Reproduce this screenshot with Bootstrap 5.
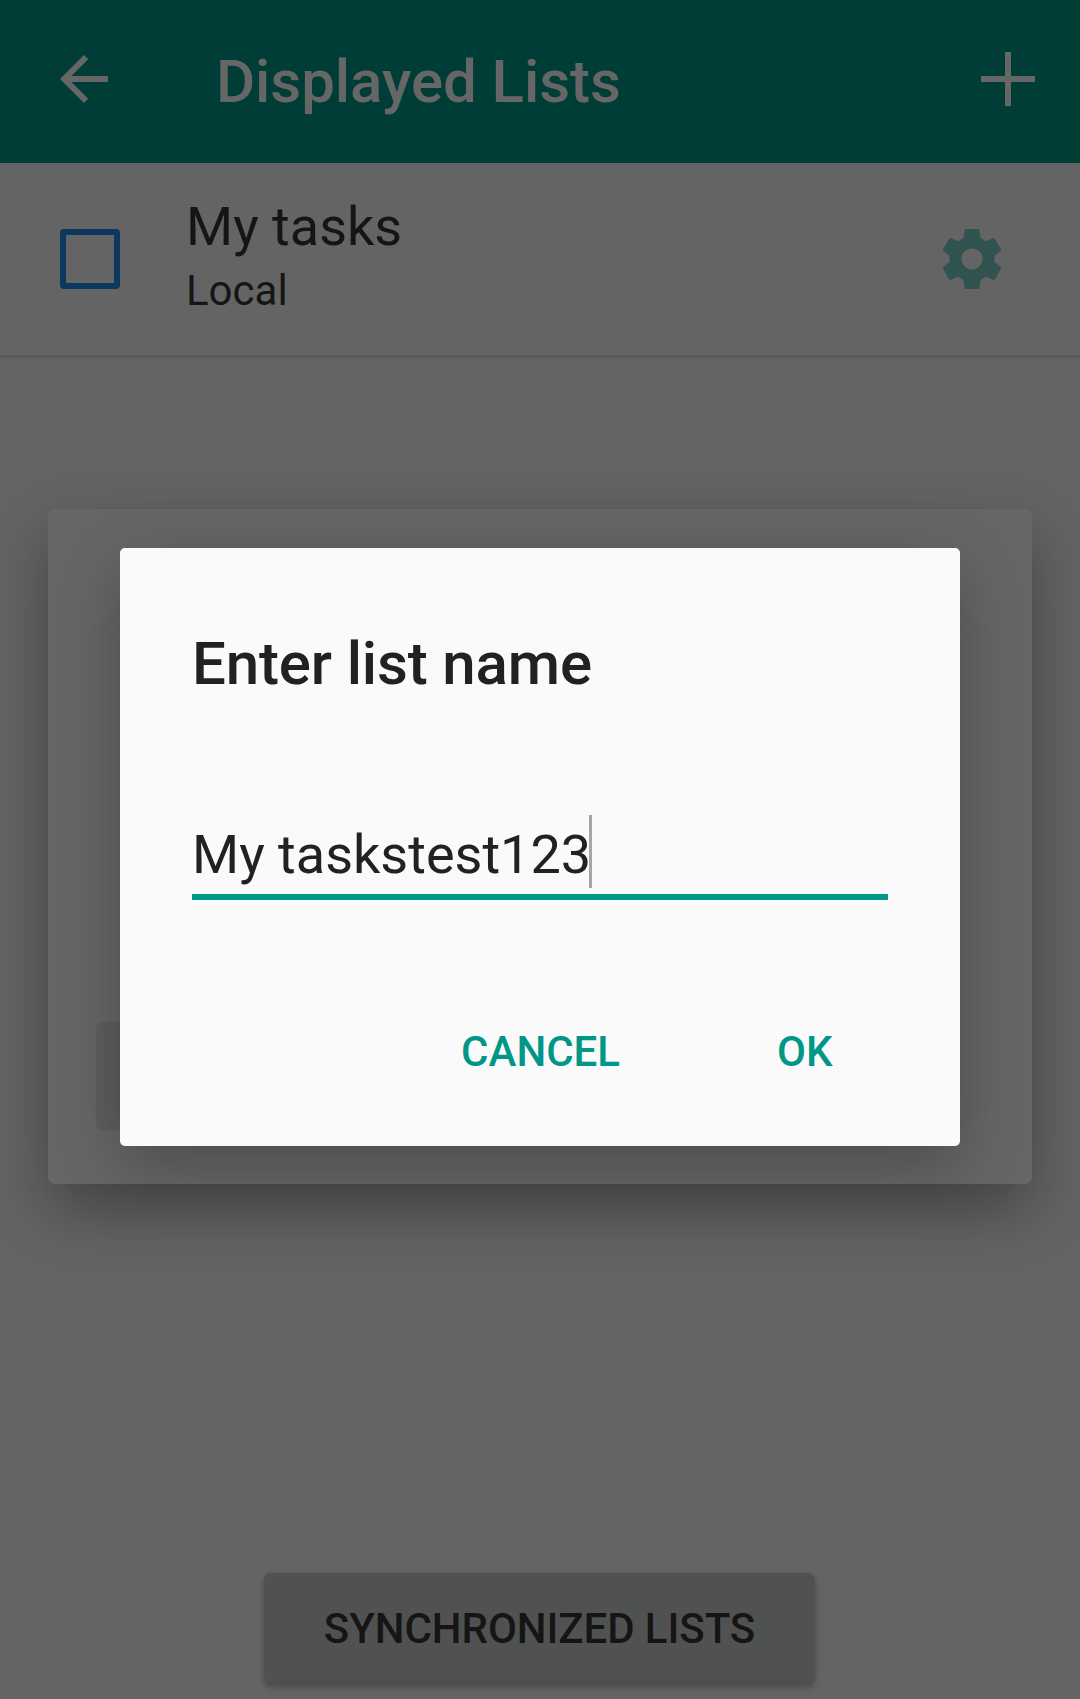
<!DOCTYPE html>
<html lang="en">
<head>
<meta charset="utf-8">
<meta name="viewport" content="width=device-width, initial-scale=1">
<title>Displayed Lists</title>
<link href="https://cdn.jsdelivr.net/npm/bootstrap@5.3.0/dist/css/bootstrap.min.css" rel="stylesheet">
<style>
  body { font-family: Roboto, sans-serif; background: #646464; color: #151515; }
  .screen { height: 1699px; overflow: hidden; }
  .fw-mid { font-weight: 500; }

  .appbar { height: 163px; padding: 0 36px 0 48px; background: #003d36; color: #666; }
  .appbar-title { margin-left: 96px; font-size: 60px; line-height: 72px; letter-spacing: -.05px; }
  .appbar-icon { margin-bottom: 5px; }

  .task-row { height: 195px; padding: 0 72px 0 60px; border-bottom: 3px solid #595959; }
  .tick-box { width: 60px; height: 60px; border: 6px solid #0d3960; border-radius: 4px; }
  .task-text { margin-left: 66px; line-height: 64px; }
  .task-name { font-size: 54px; }
  .task-account { font-size: 42px; }

  .btn-sync { width: 551px; height: 109px; margin: auto 1px 17px 0; padding: 0; border: 0; border-radius: 7px;
    background: #505251; color: #151515; font-size: 42px; letter-spacing: -.08px;
    box-shadow: 0 6px 6px rgba(0,0,0,.22), 0 0 4px rgba(0,0,0,.1); }
  .sync-label { line-height: 107px; padding-top: 2px; }

  .layer-back { padding-bottom: 6px; }
  .layer-front { padding-bottom: 5px; }
  .dialog-back { width: 984px; height: 675px; padding: 0 48px 54px; border-radius: 7px; background: #666;
    box-shadow: 0 26px 64px rgba(0,0,0,.33); }
  .back-btn { width: 264px; height: 108px; border-radius: 6px; background: #5e5e5e; }
  .dialog-front { width: 840px; height: 598px; padding: 80px 72px 0; border-radius: 5px;
    background: #fafafa; color: #212121; box-shadow: 0 20px 64px rgba(0,0,0,.26); }
  .dialog-title { font-size: 60px; line-height: 72px; letter-spacing: -.14px; }
  .name-field { height: 85px; margin-top: 115px; border-bottom: 6px solid #009688; }
  .name-value { font-size: 54px; line-height: 79px; }
  .caret { width: 3px; height: 73px; margin-left: -2px; background: #a6a6a6; }
  .dialog-actions { margin-top: 116px; gap: 157px; padding-right: 55.5px; }
  .btn-flat { padding: 0; border: 0; color: #009688; font-size: 42px; line-height: 72px; }
</style>
</head>
<body>
<div class="screen position-relative d-flex flex-column">
  <nav class="appbar d-flex align-items-center">
    <svg class="appbar-icon" width="72" height="72" viewBox="0 0 24 24" fill="currentColor"><path d="M20 11H7.83l5.59-5.59L12 4l-8 8 8 8 1.41-1.41L7.83 13H20v-2z"/></svg>
    <h1 class="appbar-title fw-mid mb-0">Displayed Lists</h1>
    <svg class="appbar-icon ms-auto" width="72" height="72" viewBox="0 0 24 24" fill="currentColor"><path d="M11 3h2v8h8v2h-8v8h-2v-8H3v-2h8z"/></svg>
  </nav>

  <main class="flex-grow-1 d-flex flex-column">
    <div class="task-row d-flex align-items-center">
      <span class="tick-box"></span>
      <div class="task-text">
        <div class="task-name">My tasks</div>
        <div class="task-account">Local</div>
      </div>
      <svg class="ms-auto" width="72" height="72" viewBox="0 0 24 24" fill="#315350"><path d="M19.43 12.98c.04-.32.07-.64.07-.98s-.03-.66-.07-.98l2.11-1.65c.19-.15.24-.42.12-.64l-2-3.46c-.12-.22-.39-.3-.61-.22l-2.49 1c-.52-.4-1.08-.73-1.69-.98l-.38-2.65C14.46 2.18 14.25 2 14 2h-4c-.25 0-.46.18-.49.42l-.38 2.65c-.61.25-1.17.59-1.69.98l-2.49-1c-.23-.09-.49 0-.61.22l-2 3.46c-.13.22-.07.49.12.64l2.11 1.65c-.04.32-.07.65-.07.98s.03.66.07.98l-2.11 1.65c-.19.15-.24.42-.12.64l2 3.46c.12.22.39.3.61.22l2.49-1c.52.4 1.08.73 1.69.98l.38 2.65c.03.24.24.42.49.42h4c.25 0 .46-.18.49-.42l.38-2.65c.61-.25 1.17-.59 1.69-.98l2.49 1c.23.09.49 0 .61-.22l2-3.46c.12-.22.07-.49-.12-.64l-2.11-1.65zM12 15.5c-1.93 0-3.5-1.57-3.5-3.5s1.57-3.5 3.5-3.5 3.5 1.57 3.5 3.5-1.57 3.5-3.5 3.5z"/></svg>
    </div>
    <button type="button" class="btn btn-sync fw-mid text-uppercase align-self-center"><span class="sync-label d-block">Synchronized lists</span></button>
  </main>

  <!-- list settings dialog, behind the name prompt -->
  <div class="layer-back position-absolute top-0 start-0 w-100 h-100 d-flex align-items-center justify-content-center">
    <div class="dialog-back d-flex align-items-end"><div class="back-btn"></div></div>
  </div>

  <!-- name prompt -->
  <div class="layer-front position-absolute top-0 start-0 w-100 h-100 d-flex align-items-center justify-content-center">
    <div class="dialog-front" role="dialog">
      <h2 class="dialog-title fw-mid mb-0">Enter list name</h2>
      <div class="name-field d-flex align-items-start">
        <span class="name-value">My taskstest123</span><span class="caret"></span>
      </div>
      <div class="dialog-actions d-flex justify-content-end">
        <button type="button" class="btn btn-flat fw-mid">CANCEL</button>
        <button type="button" class="btn btn-flat fw-mid">OK</button>
      </div>
    </div>
  </div>
</div>
<script src="https://cdn.jsdelivr.net/npm/bootstrap@5.3.0/dist/js/bootstrap.bundle.min.js"></script>
</body>
</html>
